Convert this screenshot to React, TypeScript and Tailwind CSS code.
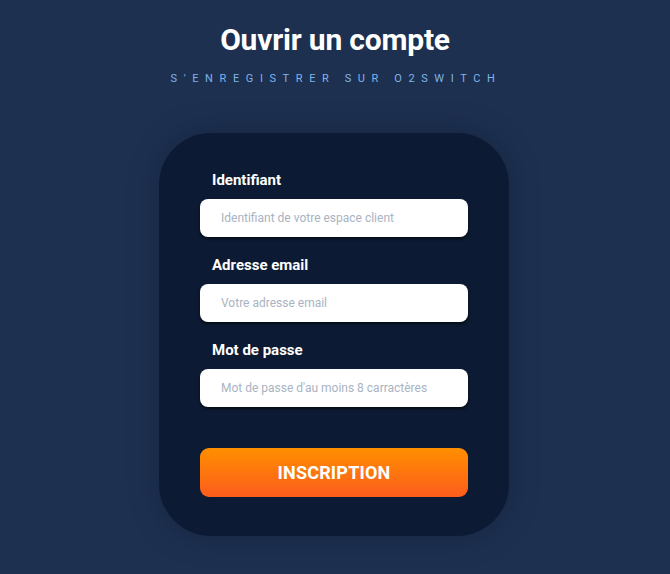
import React from "react";

const fields = [
  { label: "Identifiant", placeholder: "Identifiant de votre espace client", type: "text" },
  { label: "Adresse email", placeholder: "Votre adresse email", type: "email" },
  { label: "Mot de passe", placeholder: "Mot de passe d'au moins 8 carractères", type: "password" },
];

const App: React.FC = () => {
  return (
    <div className="min-h-[574px] w-full bg-[#1e3050] flex flex-col items-center font-['Roboto','Liberation_Sans',sans-serif]">
      {/* Header */}
      <h1 className="mt-[22px] text-[30px] leading-[36px] font-bold text-white tracking-[-0.2px]">
        Ouvrir un compte
      </h1>
      <p className="mt-[14px] text-[11px] leading-[14px] tracking-[0.6em] text-[#7fb4ea] uppercase pl-[2px]">
        S'enregistrer sur o2switch
      </p>

      {/* Card */}
      <div className="mt-[47px] mr-[2px] w-[350px] h-[403px] rounded-[52px] bg-[#0c1b33] shadow-[0_0_30px_rgba(10,20,40,0.35)] px-[41px] pt-[38px]">
        <form className="flex flex-col" onSubmit={(e) => e.preventDefault()}>
          {fields.map((f) => (
            <div key={f.label} className="flex flex-col mb-[19px]">
              <label className="pl-[12px] text-[15px] leading-[18px] font-bold text-white mb-[10px]">
                {f.label}
              </label>
              <input
                type={f.type === "password" ? "text" : f.type}
                placeholder={f.placeholder}
                className="h-[38px] w-full rounded-[8px] bg-white px-[21px] text-[12px] text-gray-700 placeholder:text-[#a9b3c2] shadow-[0_2px_3px_rgba(0,0,0,0.6)] outline-none"
              />
            </div>
          ))}
          <button
            type="submit"
            className="mt-[22px] h-[49px] w-full rounded-[9px] bg-[linear-gradient(180deg,#ff8f00,#fc5c1c)] text-white text-[18px] font-bold uppercase tracking-[0.2px]"
          >
            Inscription
          </button>
        </form>
      </div>
    </div>
  );
};

export default App;
